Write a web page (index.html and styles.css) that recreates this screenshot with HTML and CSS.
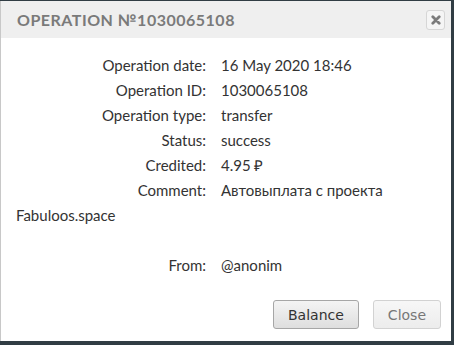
FILE: index.html
```html
<!DOCTYPE html>
<html lang="en">
<head>
    <meta charset="UTF-8">
    <title>Operation</title>
    <link rel="stylesheet" href="styles.css">
</head>
<body>
    <div class="dialog">
        <div class="dialog-title">
            <span class="title-text">Operation №1030065108</span>
            <button class="title-close" aria-label="close">
                <svg width="10" height="10" viewBox="0 0 10 10">
                    <path d="M1.8 1.8 L8.2 8.2 M8.2 1.8 L1.8 8.2" stroke="#7b7b7b" stroke-width="2.8" stroke-linecap="round"/>
                </svg>
            </button>
        </div>

        <div class="dialog-body">
            <div class="info-row"><span class="info-label">Operation date:</span><span>16 May 2020 18:46</span></div>
            <div class="info-row"><span class="info-label">Operation ID:</span><span>1030065108</span></div>
            <div class="info-row"><span class="info-label">Operation type:</span><span>transfer</span></div>
            <div class="info-row"><span class="info-label">Status:</span><span>success</span></div>
            <div class="info-row"><span class="info-label">Credited:</span><span>4.95 ₽</span></div>
            <div class="info-row"><span class="info-label">Comment:</span><span>Автовыплата с проекта</span> <span>Fabuloos.space</span></div>
            <div class="info-row">&nbsp;</div>
            <div class="info-row"><span class="info-label">From:</span><span>@anonim</span></div>
        </div>

        <div class="dialog-buttons">
            <button class="dlg-button">Balance</button>
            <button class="dlg-button dlg-button-light">Close</button>
        </div>
    </div>
</body>
</html>
```

FILE: styles.css
```css
body {
    margin: 0;
    padding-top: 1px;
    background: #313d44;
    height: 345px;
    box-sizing: border-box;
    overflow: hidden;
}

.dialog {
    width: 451px;
    height: 340px;
    box-sizing: border-box;
    background: #fff;
    border-left: 1px solid #c8c8c8;
    display: flex;
    flex-direction: column;
}

/* Title bar */
.dialog-title {
    height: 37px;
    background: #efefef;
    display: flex;
    align-items: center;
    justify-content: space-between;
    padding: 0 6px 0 16px;
}

.title-text {
    font-family: 'Lato', sans-serif;
    font-weight: 700;
    font-size: 16px;
    letter-spacing: 0.5px;
    text-transform: uppercase;
    color: #7a7a7a;
}

.title-close {
    width: 19px;
    height: 20px;
    padding: 0;
    border: 1px solid #d6d6d6;
    border-radius: 3px;
    background: #f5f5f5;
    display: flex;
    align-items: center;
    justify-content: center;
}

/* Details */
.dialog-body {
    padding: 15px 16px 0 15px;
    font-family: 'Lato', sans-serif;
    font-size: 15px;
    line-height: 25px;
    color: #333;
}

.info-label {
    display: inline-block;
    width: 190px;
    margin-right: 15px;
    text-align: right;
}

/* Buttons */
.dialog-buttons {
    margin-top: auto;
    display: flex;
    justify-content: flex-end;
    gap: 14px;
    padding: 0 10px 12px 0;
}

.dlg-button {
    height: 29px;
    padding: 0 14px;
    font-family: 'DejaVu Sans', sans-serif;
    font-size: 14px;
    color: #333;
    border: 1px solid #a6a6a6;
    border-radius: 3px;
    background: linear-gradient(#f4f4f4, #dedede);
}

.dlg-button-light {
    color: #777;
    border-color: #d2d2d2;
    background: linear-gradient(#f7f7f7, #ececec);
}
```
